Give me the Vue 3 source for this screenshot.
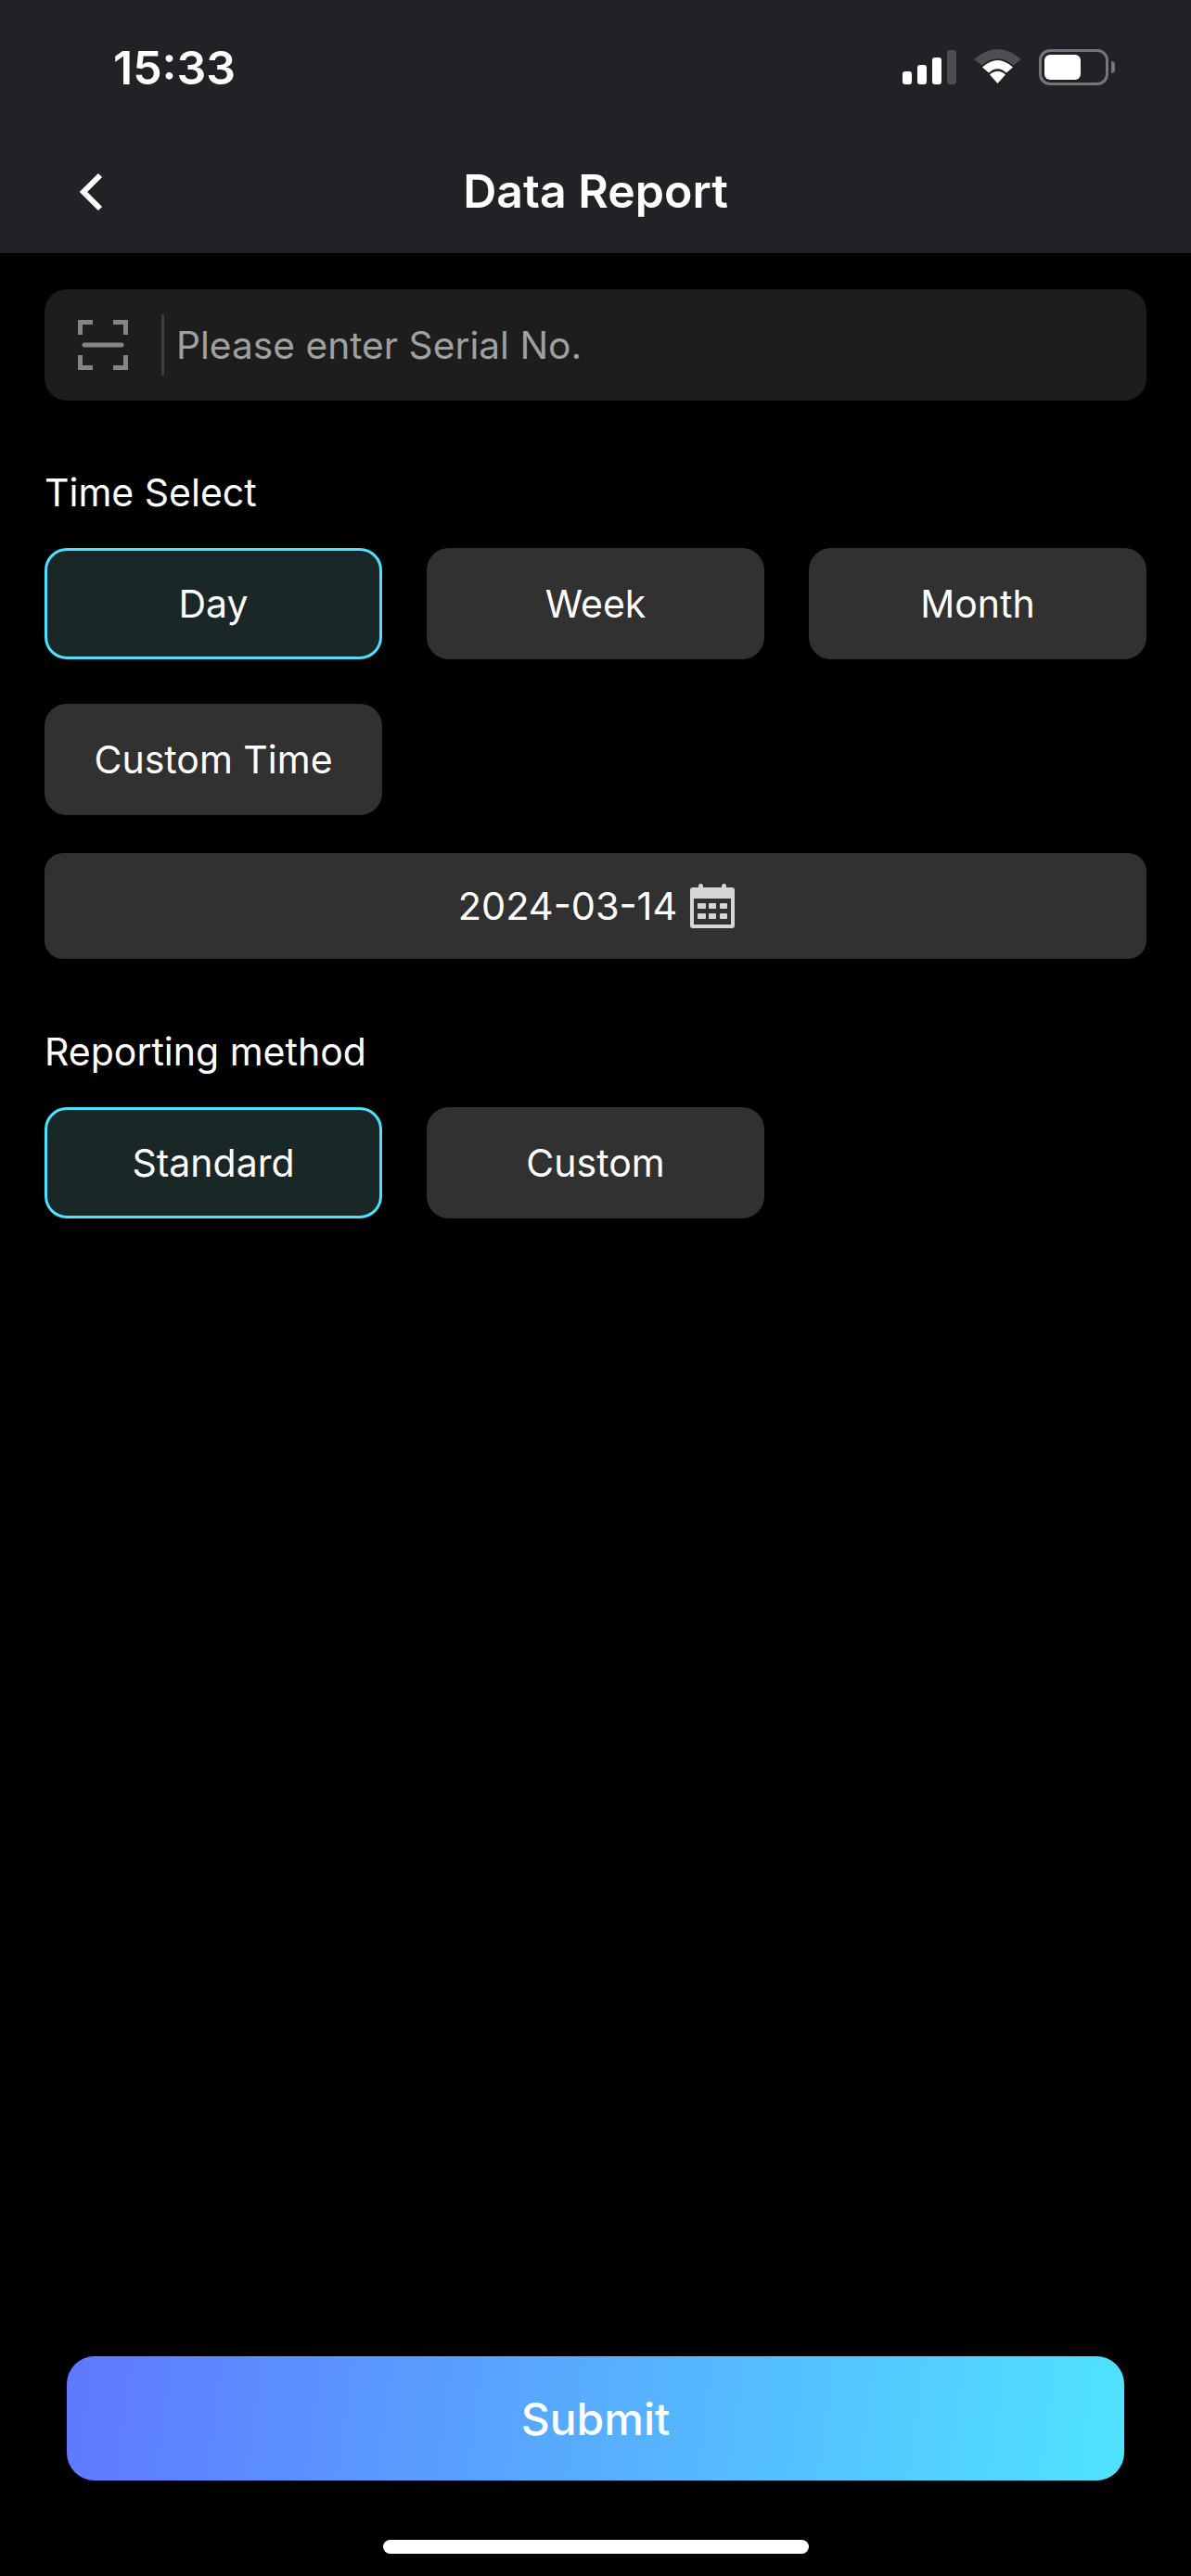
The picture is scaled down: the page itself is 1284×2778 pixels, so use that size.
<template>
  <div class="page">
    <header class="header">
      <div class="status">
        <span class="time">15:33</span>
        <div class="status-icons">
          <div class="signal">
            <i class="b1"></i><i class="b2"></i><i class="b3"></i><i class="b4"></i>
          </div>
          <svg class="wifi" width="52" height="38" viewBox="0 0 52 38">
            <path fill="#4d4e52" d="M0 11Q25.5 -11 51 11L42.5 17.5Q25.5 3 8.5 17.5Z" />
            <path fill="#fff" d="M9 19.5Q25.5 4.5 42 19.5L35 25.5Q25.5 17 16 25.5Z" />
            <path fill="#fff" d="M17 27.5Q25.5 20 34 27.5L25.5 37Z" />
          </svg>
          <div class="battery"><div class="level"></div></div>
          <div class="nub"></div>
        </div>
      </div>
      <div class="nav">
        <svg class="back" width="28" height="42" viewBox="0 0 28 42">
          <path d="M24 3L6 21L24 39" fill="none" stroke="#fff" stroke-width="6" />
        </svg>
        <h1 class="title">Data Report</h1>
      </div>
    </header>

    <main class="content">
      <div class="serial">
        <svg class="scan" width="54" height="54" viewBox="0 0 54 54">
          <path d="M2.5 16V2.5H16M38 2.5H51.5V16M2.5 38V51.5H16M38 51.5H51.5V38" fill="none" stroke="#858585" stroke-width="5" />
          <path d="M7 27H47" fill="none" stroke="#858585" stroke-width="5" stroke-linecap="round" />
        </svg>
        <div class="divider"></div>
        <span class="placeholder">Please enter Serial No.</span>
      </div>

      <div class="label first">Time Select</div>
      <div class="choices">
        <div v-for="o in timeOptions" :key="o" class="choice" :class="{ active: o === 'Day' }">{{ o }}</div>
      </div>
      <div class="date">
        <span>2024-03-14</span>
        <svg class="cal" width="48" height="48" viewBox="0 0 48 48">
          <rect x="9" y="0" width="5" height="8" rx="2.5" fill="#d5d6da" />
          <rect x="34" y="0" width="5" height="8" rx="2.5" fill="#d5d6da" />
          <rect x="0" y="4" width="48" height="44" rx="3" fill="#d5d6da" />
          <rect x="4" y="16" width="40" height="28" fill="#313131" />
          <g fill="#d5d6da">
            <rect x="8" y="21" width="9" height="6" rx="1" />
            <rect x="20" y="21" width="8" height="6" rx="1" />
            <rect x="32" y="21" width="8" height="6" rx="1" />
            <rect x="8" y="32" width="9" height="6" rx="1" />
            <rect x="20" y="32" width="8" height="6" rx="1" />
            <rect x="32" y="32" width="8" height="6" rx="1" />
          </g>
        </svg>
      </div>

      <div class="label second">Reporting method</div>
      <div class="choices">
        <div v-for="o in methodOptions" :key="o" class="choice" :class="{ active: o === 'Standard' }">{{ o }}</div>
      </div>
    </main>

    <button class="submit">Submit</button>
    <div class="home"></div>
  </div>
</template>

<script setup>
const timeOptions = ['Day', 'Week', 'Month', 'Custom Time']
const methodOptions = ['Standard', 'Custom']
</script>

<style scoped>
.page {
  width: 1284px;
  height: 2778px;
  background: #000;
  color: #fff;
  font-family: Inter, "Liberation Sans", sans-serif;
  display: flex;
  flex-direction: column;
  overflow: hidden;
}
.header {
  height: 273px;
  background: #212226;
  flex: none;
}
.status {
  height: 144px;
  display: flex;
  justify-content: space-between;
  align-items: flex-start;
  padding: 0 82px 0 122px;
}
.time {
  font-size: 50px;
  line-height: 60px;
  font-weight: 600;
  margin-top: 43px;
}
.status-icons {
  display: flex;
  align-items: flex-start;
  margin-top: 53px;
}
.signal {
  display: flex;
  align-items: flex-end;
  gap: 6px;
  height: 38px;
  margin-right: 19px;
}
.signal i {
  display: block;
  width: 10px;
  background: #fff;
  border-radius: 3px;
}
.b1 { height: 14px; }
.b2 { height: 21px; }
.b3 { height: 29px; }
.signal .b4 { height: 37px; background: #4d4e52; }
.wifi {
  margin-right: 18px;
}
.battery {
  width: 75px;
  height: 39px;
  box-sizing: border-box;
  border: 3px solid #757679;
  border-radius: 12px;
  padding: 3px;
}
.level {
  width: 39px;
  height: 27px;
  background: #fff;
  border-radius: 6px;
}
.nub {
  width: 4px;
  height: 13px;
  margin: 13px 0 0 3px;
  background: #757679;
  border-radius: 0 7px 7px 0;
}
.nav {
  height: 129px;
  position: relative;
  display: flex;
  align-items: center;
  justify-content: center;
}
.back {
  position: absolute;
  left: 84px;
  top: 42px;
}
.title {
  margin: 0;
  font-size: 50px;
  line-height: 60px;
  font-weight: 600;
  margin-top: -5px;
}
.content {
  padding: 39px 48px 0;
  flex: 1;
}
.serial {
  height: 120px;
  background: #1d1d1d;
  border-radius: 24px;
  display: flex;
  align-items: center;
  padding-left: 36px;
}
.divider {
  width: 3px;
  height: 66px;
  background: #3f3f3f;
  margin: 0 13px 0 36px;
}
.placeholder {
  font-size: 40.7px;
  color: #a0a0a0;
}
.label {
  font-size: 41px;
  line-height: 48px;
}
.first {
  margin-top: 75px;
  margin-bottom: 36px;
}
.second {
  margin-top: 76px;
  margin-bottom: 36px;
}
.choices {
  display: grid;
  grid-template-columns: repeat(3, 364px);
  gap: 48px;
}
.choice {
  height: 120px;
  box-sizing: border-box;
  background: #313131;
  border-radius: 24px;
  font-size: 41px;
  display: flex;
  align-items: center;
  justify-content: center;
}
.choice.active {
  background: #1a2727;
  border: 3px solid #4de0ff;
}
.date {
  height: 114px;
  margin-top: 41px;
  padding-left: 2px;
  background: #313131;
  border-radius: 20px;
  font-size: 41.5px;
  display: flex;
  align-items: center;
  justify-content: center;
  gap: 14px;
}
.submit {
  flex: none;
  display: block;
  width: 1140px;
  height: 134px;
  margin: 0 auto;
  border: 0;
  border-radius: 30px;
  background: linear-gradient(98deg, #5f78ff 0%, #4fe3ff 100%);
  color: #fff;
  font-family: inherit;
  font-size: 48px;
  font-weight: 500;
}
.home {
  flex: none;
  width: 459px;
  height: 15px;
  margin: 64px auto 24px;
  background: #fff;
  border-radius: 8px;
}
</style>
